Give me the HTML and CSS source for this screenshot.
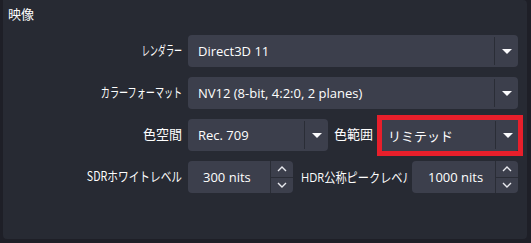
FILE: index.html
```html
<!DOCTYPE html>
<html lang="ja">
<head>
<meta charset="utf-8">
<link rel="stylesheet" href="styles.css">
</head>
<body>
<div class="panel">
  <div class="title">映像</div>
  <div class="row">
    <div class="label"><span class="sq sq-a">レンダラー</span></div>
    <div class="combo wide"><span class="val">Direct3D 11</span><span class="arrow"></span></div>
  </div>
  <div class="row">
    <div class="label"><span class="sq sq-b">カラーフォーマット</span></div>
    <div class="combo wide"><span class="val">NV12 (8-bit, 4:2:0, 2 planes)</span><span class="arrow"></span></div>
  </div>
  <div class="row">
    <div class="label">色空間</div>
    <div class="combo c1"><span class="val">Rec. 709</span><span class="arrow"></span></div>
    <div class="label2">色範囲</div>
    <div class="hl-wrap">
      <div class="combo c2"><span class="val">リミテッド</span><span class="arrow"></span></div>
      <div class="highlight"></div>
    </div>
  </div>
  <div class="row">
    <div class="label"><span class="sq sq-c">SDRホワイトレベル</span></div>
    <div class="spin s1"><span class="sval">300 nits</span>
      <span class="btns"><span class="up"><svg width="10" height="6" viewBox="0 0 10 6"><path d="M1 5 L5 1 L9 5" fill="none" stroke="#e8e9ee" stroke-width="1.4"/></svg></span><span class="down"><svg width="10" height="6" viewBox="0 0 10 6"><path d="M1 1 L5 5 L9 1" fill="none" stroke="#e8e9ee" stroke-width="1.4"/></svg></span></span>
    </div>
    <div class="label3"><span class="sq sq-d">HDR公称ピークレベル</span></div>
    <div class="spin s2"><span class="sval">1000 nits</span>
      <span class="btns"><span class="up"><svg width="10" height="6" viewBox="0 0 10 6"><path d="M1 5 L5 1 L9 5" fill="none" stroke="#e8e9ee" stroke-width="1.4"/></svg></span><span class="down"><svg width="10" height="6" viewBox="0 0 10 6"><path d="M1 1 L5 5 L9 1" fill="none" stroke="#e8e9ee" stroke-width="1.4"/></svg></span></span>
    </div>
  </div>
</div>
</body>
</html>
```
FILE: styles.css
```css
html, body {
  margin: 0;
  padding: 0;
  background: #1e1f27;
  width: 531px;
  height: 243px;
  overflow: hidden;
}
body {
  font-family: "Open Sans", "Noto Sans CJK JP", sans-serif;
  font-size: 13px;
  color: #fefefe;
}
.panel {
  margin-left: 3px;
  width: 524px;
  height: 239px;
  background: #272a33;
  border-radius: 0 4px 4px 4px;
  box-sizing: border-box;
  padding-top: 5px;
}
.title {
  padding-left: 5px;
  height: 18px;
  line-height: 18px;
  font-family: "Noto Sans CJK JP", sans-serif;
}
.row {
  display: flex;
  align-items: center;
  height: 32px;
  margin-top: 10px;
}
.title + .row { margin-top: 12px; }
.label {
  width: 179px;
  flex: none;
  text-align: right;
  margin-right: 6px;
  font-family: "Noto Sans CJK JP", sans-serif;
  white-space: nowrap;
  position: relative;
  top: -2px;
}
.sq {
  display: inline-block;
  transform-origin: right center;
}
.sq-a { transform: scaleX(0.62); }
.sq-b { transform: scaleX(0.70); }
.sq-c { transform: scaleX(0.82); }
.sq-d { transform: scaleX(0.86); transform-origin: left center; }
.combo {
  height: 32px;
  background: #3c3f4c;
  border-radius: 4px;
  display: flex;
  align-items: center;
  box-sizing: border-box;
  position: relative;
  flex: none;
}
.combo.wide { width: 330px; }
.combo.c1 { width: 140px; }
.combo.c2 { width: 139px; }
.val {
  flex: 1;
  padding-left: 10px;
  white-space: nowrap;
  overflow: hidden;
}
.c2 .val { font-family: "Noto Sans CJK JP", sans-serif; padding-left: 8px; }
.arrow {
  width: 23px;
  height: 28px;
  border-left: 1px solid #2a2d36;
  flex: none;
  position: relative;
}
.arrow::after {
  content: "";
  position: absolute;
  left: 7px;
  top: 12px;
  border-left: 5px solid transparent;
  border-right: 5px solid transparent;
  border-top: 5px solid #fbfbfd;
}
.label2 {
  margin-left: 6px;
  margin-right: 7px;
  font-family: "Noto Sans CJK JP", sans-serif;
  white-space: nowrap;
  position: relative;
  top: -2px;
}
.hl-wrap {
  position: relative;
  flex: none;
}
.highlight {
  position: absolute;
  left: -3px;
  top: -4px;
  width: 146px;
  height: 41px;
  border: 5px solid #e81f2b;
  box-sizing: border-box;
}
.spin {
  height: 32px;
  background: #3c3f4c;
  border-radius: 4px;
  display: flex;
  align-items: center;
  box-sizing: border-box;
  flex: none;
}
.spin.s1 { width: 105px; }
.spin.s2 { width: 106px; }
.sval {
  flex: 1;
  white-space: nowrap;
  padding-left: 15px;
}
.s2 .sval { padding-left: 16px; }
.btns {
  width: 22px;
  height: 32px;
  border-left: 1px solid #2a2d36;
  display: flex;
  flex-direction: column;
  flex: none;
}
.btns .up, .btns .down {
  flex: 1;
  display: flex;
  align-items: center;
  justify-content: center;
}
.btns .up { border-bottom: 1px solid #2a2d36; }
.label3 {
  width: 107px;
  margin-left: 8px;
  margin-right: 4px;
  overflow: hidden;
  white-space: nowrap;
  font-family: "Open Sans", "Noto Sans CJK JP", sans-serif;
  position: relative;
  top: -1px;
}
```
